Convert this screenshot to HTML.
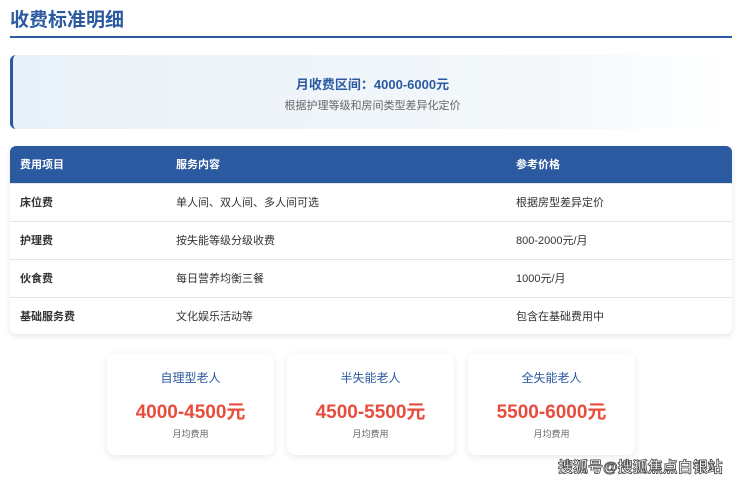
<!DOCTYPE html><html><head><meta charset="utf-8"><style>
*{margin:0;padding:0;box-sizing:border-box}
body{width:740px;height:484px;background:#fff;font-family:"Liberation Sans","Noto Sans CJK SC",sans-serif;position:relative;overflow:hidden}
.t{position:absolute;left:10px;top:5px;font-size:19px;font-weight:bold;color:#2c5aa0}
.ln{position:absolute;left:10px;top:36px;width:722px;height:2px;background:#2c5aa0}
.bn{position:absolute;left:10px;top:55px;width:722px;height:74px;border-left:3px solid #2c5aa0;border-radius:6px;background:linear-gradient(90deg,#e8f1f8,#f4f8fb 75%,#fff);text-align:center}
.bn b{display:block;margin-top:19px;font-size:13px;color:#2c5aa0}
.bn span{display:block;margin-top:4px;font-size:11px;color:#666}
.tb{position:absolute;left:10px;top:146px;width:722px;height:188px;border-radius:6px;box-shadow:0 2px 6px rgba(0,0,0,.1);overflow:hidden;font-size:11px;color:#333}
.r{height:38px;position:relative;border-bottom:1px solid #e6e6e6}
.r:last-child{border-bottom:none}
.h{background:#2c5aa0;color:#fff;font-weight:bold}
.r div{position:absolute;top:0;line-height:38px}
.c1{left:10px}.c2{left:166px}.c3{left:506px}
.r .c1{font-weight:bold}
.cd{position:absolute;top:353px;width:167px;height:102px;border-radius:8px;box-shadow:0 2px 8px rgba(0,0,0,.09);background:#fff;text-align:center}
.cd .a{margin-top:16px;font-size:12px;color:#2c5aa0}
.cd .p{margin-top:11px;font-size:19px;font-weight:bold;color:#e84c3d}
.cd .s{margin-top:3px;font-size:9px;color:#666}
.wm{position:absolute;left:558px;top:456px;font-size:15px;font-weight:bold;color:#fff;-webkit-text-stroke:0.8px #444;letter-spacing:0}
</style></head><body>
<div class="t">收费标准明细</div><div class="ln"></div>
<div class="bn"><b>月收费区间：4000-6000元</b><span>根据护理等级和房间类型差异化定价</span></div>
<div class="tb">
<div class="r h"><div class="c1">费用项目</div><div class="c2">服务内容</div><div class="c3">参考价格</div></div>
<div class="r"><div class="c1">床位费</div><div class="c2">单人间、双人间、多人间可选</div><div class="c3">根据房型差异定价</div></div>
<div class="r"><div class="c1">护理费</div><div class="c2">按失能等级分级收费</div><div class="c3">800-2000元/月</div></div>
<div class="r"><div class="c1">伙食费</div><div class="c2">每日营养均衡三餐</div><div class="c3">1000元/月</div></div>
<div class="r"><div class="c1">基础服务费</div><div class="c2">文化娱乐活动等</div><div class="c3">包含在基础费用中</div></div>
</div>
<div class="cd" style="left:107px"><div class="a">自理型老人</div><div class="p">4000-4500元</div><div class="s">月均费用</div></div>
<div class="cd" style="left:287px"><div class="a">半失能老人</div><div class="p">4500-5500元</div><div class="s">月均费用</div></div>
<div class="cd" style="left:468px"><div class="a">全失能老人</div><div class="p">5500-6000元</div><div class="s">月均费用</div></div>
<div class="wm">搜狐号@搜狐焦点白银站</div>
</body></html>
